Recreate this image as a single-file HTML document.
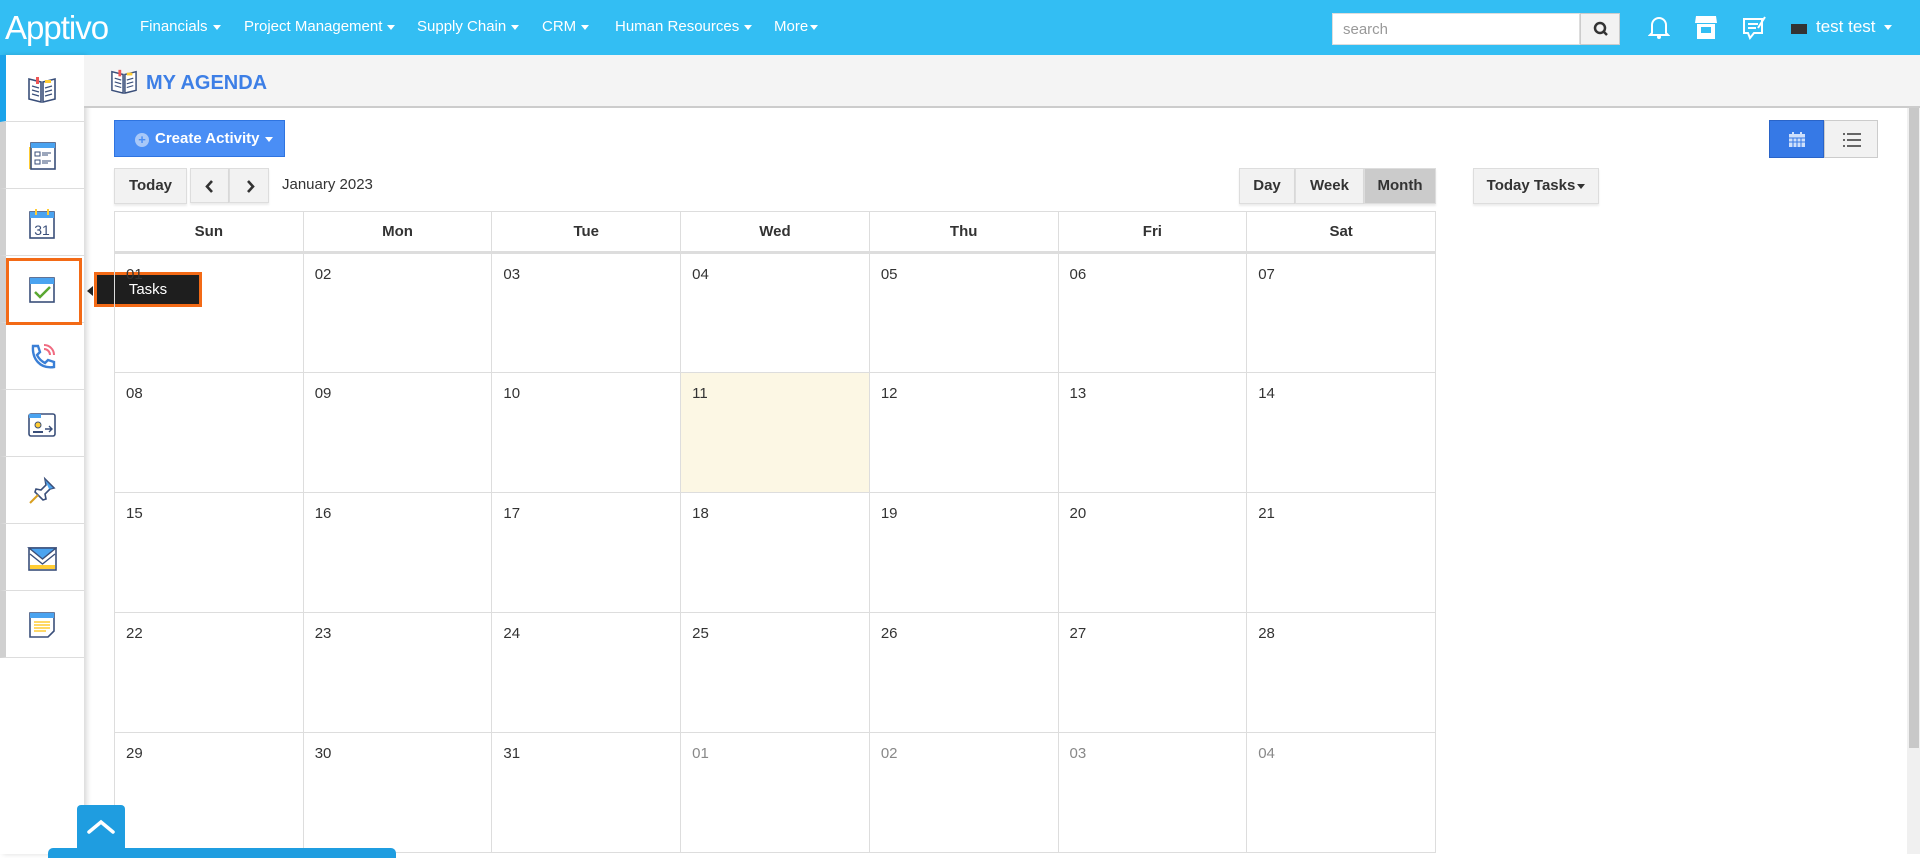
<!DOCTYPE html>
<html><head><meta charset="utf-8"><style>
*{box-sizing:border-box;margin:0;padding:0}
body{width:1920px;height:854px;overflow:hidden;font-family:"Liberation Sans",Arial,sans-serif;background:#fff;position:relative;color:#333}
.top{position:absolute;left:0;top:0;width:1920px;height:55px;background:#33bef3}
.logo{position:absolute;left:5px;top:9px;color:#fff;font-size:33px;letter-spacing:-1px}
.nav{position:absolute;top:18px;color:#fff;font-size:15px}
.car{display:inline-block;width:0;height:0;border-left:4px solid transparent;border-right:4px solid transparent;border-top:5px solid #fff;vertical-align:middle;margin-left:5px}
.search{position:absolute;left:1332px;top:13px;width:248px;height:32px;background:#fff;border:1px solid #ddd;font-size:15px;color:#999;padding:7px 10px}
.sbtn{position:absolute;left:1580px;top:13px;width:40px;height:32px;background:#f2f2f2;border:1px solid #ccc}
.side{position:absolute;left:0;top:55px;width:84px;height:799px;background:#fff;box-shadow:3px 0 5px rgba(0,0,0,.15)}
.si{position:absolute;left:0;width:84px;height:67px;border-left:6px solid #d0d0d0;border-bottom:1px solid #ddd;background:#fff}
.si svg{position:absolute;left:21px;top:19px}
.hdr{position:absolute;left:84px;top:55px;width:1836px;height:53px;background:#f4f4f4;border-bottom:2px solid #ccc}
.title{position:absolute;left:146px;top:72px;font-size:20px;font-weight:bold;color:#3d7fe6}
.btn{position:absolute;background:#f2f2f2;border:1px solid #ddd;font-size:15px;font-weight:bold;color:#333;text-align:center;box-shadow:0 2px 2px rgba(0,0,0,.08)}
.cal{position:absolute;left:114px;top:211px;width:1322px;border-collapse:collapse;table-layout:fixed}
.cal th{height:41px;border:1px solid #ddd;border-bottom:3px solid #ddd;font-size:15px;font-weight:bold;color:#333}
.cal td{height:120px;border:1px solid #ddd;vertical-align:top;padding:12px 11px;font-size:15px;color:#333}
.cal td.o{color:#888}
</style></head><body>
<div class="top">
<div class="logo">Apptivo</div>
<div class="nav" style="left:140px">Financials<span class="car"></span></div>
<div class="nav" style="left:244px">Project Management<span class="car"></span></div>
<div class="nav" style="left:417px">Supply Chain<span class="car"></span></div>
<div class="nav" style="left:542px">CRM<span class="car"></span></div>
<div class="nav" style="left:615px">Human Resources<span class="car"></span></div>
<div class="nav" style="left:774px">More<span class="car" style="margin-left:2px"></span></div>
<div class="search">search</div>
<div class="sbtn"><svg width="40" height="30" viewBox="0 0 40 30"><circle cx="19" cy="14" r="5" fill="none" stroke="#333" stroke-width="2.5"/><line x1="22.5" y1="17.5" x2="26" y2="21" stroke="#333" stroke-width="2.5"/></svg></div>
<svg style="position:absolute;left:1648px;top:14px" width="22" height="26" viewBox="0 0 22 26"><path d="M4 19V11a7 7 0 0114 0v8l2 2H2z" fill="none" stroke="#fff" stroke-width="2"/><circle cx="11" cy="23" r="2" fill="#fff"/></svg>
<svg style="position:absolute;left:1695px;top:14px" width="22" height="28" viewBox="0 0 22 28"><path d="M1 2h20l1 7H0z" fill="#fff"/><rect x="2" y="10" width="18" height="15" fill="#fff"/><rect x="6" y="13" width="10" height="6" fill="#33bef3"/></svg>
<svg style="position:absolute;left:1742px;top:14px" width="26" height="28" viewBox="0 0 26 28"><path d="M2 5h18v14H12l-4 5-2-5H2z" fill="none" stroke="#fff" stroke-width="2"/><path d="M6 10h10M6 14h8" stroke="#fff" stroke-width="2"/><path d="M16 14l7-11" stroke="#fff" stroke-width="2"/></svg>
<div style="position:absolute;left:1791px;top:24px;width:16px;height:10px;background:#333"></div>
<div style="position:absolute;left:1816px;top:17px;color:#fff;font-size:17px">test test<span class="car" style="margin-left:8px"></span></div>
</div>

<div class="side">
<div class="si" style="top:0;border-left-color:#1aa3ea"><svg width="30" height="30" viewBox="0 0 30 30"><path d="M2 5l12 3v20L2 25zM28 5L16 8v20l12-3z" fill="#fff" stroke="#3a4f7a" stroke-width="1.6"/><path d="M5 12l7 2M5 16l7 2M5 20l7 2M18 14l7-2M18 18l7-2M18 22l7-2" stroke="#3a4f7a" stroke-width="1.2"/><rect x="9" y="3" width="3" height="7" fill="#e55"/><rect x="18" y="6" width="6" height="3" fill="#fc3"/></svg></div>
<div class="si" style="top:67px"><svg width="30" height="30" viewBox="0 0 30 30"><rect x="2" y="6" width="3" height="22" fill="#fc3"/><rect x="4" y="2" width="24" height="26" fill="#fff" stroke="#3a4f7a" stroke-width="1.6"/><rect x="4" y="2" width="24" height="5" fill="#4aa3f0"/><rect x="8" y="11" width="5" height="4" fill="none" stroke="#3a4f7a"/><rect x="8" y="19" width="5" height="4" fill="none" stroke="#3a4f7a"/><path d="M15 12h9M15 14h6M15 20h9M15 22h6" stroke="#3a4f7a"/></svg></div>
<div class="si" style="top:134px"><svg width="30" height="32" viewBox="0 0 30 32"><rect x="3" y="4" width="24" height="26" fill="#fff" stroke="#3a4f7a" stroke-width="1.6"/><rect x="3" y="4" width="24" height="6" fill="#4aa3f0"/><rect x="8" y="1" width="2" height="6" fill="#fc3"/><rect x="20" y="1" width="2" height="6" fill="#fc3"/><text x="15" y="27" font-size="14" text-anchor="middle" fill="#3a4f7a" font-family="Liberation Sans">31</text></svg></div>
<div class="si" style="top:201px"><svg width="30" height="30" viewBox="0 0 30 30"><rect x="3" y="3" width="24" height="24" fill="#fff" stroke="#3a4f7a" stroke-width="1.6"/><rect x="3" y="3" width="24" height="6" fill="#4aa3f0"/><path d="M8 17l5 5 10-10" fill="none" stroke="#5aa832" stroke-width="2.5"/></svg></div>
<div class="si" style="top:268px"><svg width="30" height="30" viewBox="0 0 30 30"><path d="M6 4l5 0 2 6-3 3c2 4 4 6 8 8l3-3 6 2v5c-14 2-22-8-21-21z" fill="#fff" stroke="#3a7fd6" stroke-width="2.4"/><path d="M17 3a10 10 0 0110 10M17 7a6 6 0 016 6" fill="none" stroke="#f06a80" stroke-width="2"/></svg></div>
<div class="si" style="top:335px"><svg width="30" height="30" viewBox="0 0 30 30"><rect x="2" y="5" width="26" height="22" rx="2" fill="#fff" stroke="#3a4f7a" stroke-width="1.6"/><rect x="2" y="5" width="12" height="4" fill="#4aa3f0"/><circle cx="11" cy="16" r="3" fill="#fc3" stroke="#3a4f7a"/><path d="M6 23h10" stroke="#3a4f7a" stroke-width="2"/><path d="M18 20h7M22 17l3 3-3 3" fill="none" stroke="#3a4f7a" stroke-width="1.4"/></svg></div>
<div class="si" style="top:402px"><svg width="30" height="30" viewBox="0 0 30 30"><path d="M18 3l9 9-4 1-5 5 1 5-3 1-8-8 1-3 5 1 5-5z" fill="#fff" stroke="#3a4f7a" stroke-width="1.6"/><path d="M18 4l8 8-4 1z" fill="#4aa3f0"/><path d="M11 19l-8 8" stroke="#d9a020" stroke-width="2"/></svg></div>
<div class="si" style="top:469px"><svg width="30" height="30" viewBox="0 0 30 30"><rect x="2" y="5" width="27" height="22" fill="#fff" stroke="#3a4f7a" stroke-width="1.6"/><path d="M2 5l13.5 11L29 5z" fill="#4aa3f0" stroke="#3a4f7a" stroke-width="1.4"/><path d="M3 11l12.5 10L28 11" fill="none" stroke="#3a4f7a" stroke-width="1.4"/><rect x="3" y="22" width="25" height="4" fill="#fc3"/></svg></div>
<div class="si" style="top:536px"><svg width="30" height="30" viewBox="0 0 30 30"><path d="M3 3h24v18l-6 6H3z" fill="#fff" stroke="#3a4f7a" stroke-width="1.6"/><rect x="3" y="3" width="24" height="5" fill="#4aa3f0"/><path d="M7 12h16M7 15h16M7 18h16M7 21h12" stroke="#fc3" stroke-width="1.6"/></svg></div>
</div>
<div style="position:absolute;left:6px;top:258px;width:76px;height:67px;border:3px solid #f36a16"></div>
<div style="position:absolute;left:87px;top:286px;width:0;height:0;border-top:5px solid transparent;border-bottom:5px solid transparent;border-right:6px solid #222"></div>
<div style="position:absolute;left:94px;top:272px;width:108px;height:35px;background:#1e1e1e;border:3px solid #f36a16;color:#fff;font-size:15px;text-align:center;line-height:29px">Tasks</div>

<div class="hdr"></div>
<svg style="position:absolute;left:110px;top:68px" width="28" height="26" viewBox="0 0 30 28"><path d="M2 4l12 3v20L2 24zM28 4L16 7v20l12-3z" fill="#fff" stroke="#3a4f7a" stroke-width="1.6"/><path d="M5 11l7 2M5 15l7 2M5 19l7 2M18 13l7-2M18 17l7-2M18 21l7-2" stroke="#3a4f7a" stroke-width="1.2"/><rect x="9" y="2" width="3" height="7" fill="#e55"/><rect x="18" y="5" width="6" height="3" fill="#fc3"/></svg>
<div class="title">MY AGENDA</div>

<div style="position:absolute;left:114px;top:120px;width:171px;height:37px;background:#4a8ef5;border:1px solid #2f74e0;color:#fff;font-size:15px;font-weight:bold;line-height:35px;padding-left:20px"><span style="display:inline-block;width:14px;height:14px;border-radius:50%;background:#a8c8f8;vertical-align:-1px;margin-right:6px;color:#4a8ef5;font-size:13px;line-height:14px;text-align:center">+</span>Create Activity<span class="car"></span></div>

<div class="btn" style="left:114px;top:168px;width:73px;height:36px;line-height:34px">Today</div>
<div class="btn" style="left:190px;top:168px;width:39px;height:35px"><svg style="position:absolute;left:14px;top:11px" width="10" height="13" viewBox="0 0 10 13"><path d="M7 1L2 6.5 7 12" fill="none" stroke="#333" stroke-width="2.6"/></svg></div>
<div class="btn" style="left:229px;top:168px;width:40px;height:35px"><svg style="position:absolute;left:15px;top:11px" width="10" height="13" viewBox="0 0 10 13"><path d="M3 1l5 5.5L3 12" fill="none" stroke="#333" stroke-width="2.6"/></svg></div>
<div style="position:absolute;left:282px;top:176px;font-size:15px;color:#333">January 2023</div>

<div class="btn" style="left:1239px;top:168px;width:56px;height:36px;line-height:34px">Day</div>
<div class="btn" style="left:1295px;top:168px;width:69px;height:36px;line-height:34px">Week</div>
<div class="btn" style="left:1364px;top:168px;width:72px;height:36px;line-height:34px;background:#cbcbcb">Month</div>
<div class="btn" style="left:1473px;top:168px;width:126px;height:36px;line-height:34px">Today Tasks<span class="car" style="border-top-color:#333;margin-left:2px"></span></div>

<div style="position:absolute;left:1769px;top:120px;width:55px;height:38px;background:#3679e6;border:1px solid #2a64c8"><svg style="position:absolute;left:19px;top:11px" width="16" height="15" viewBox="0 0 16 15"><rect x="0" y="2" width="16" height="13" fill="#cfe0fb"/><rect x="3" y="0" width="2" height="4" fill="#cfe0fb"/><rect x="11" y="0" width="2" height="4" fill="#cfe0fb"/><path d="M0 6h16M4 6v9M8 6v9M12 6v9M0 10h16" stroke="#3679e6"/></svg></div>
<div style="position:absolute;left:1824px;top:120px;width:54px;height:38px;background:#f2f2f2;border:1px solid #ccc"><svg style="position:absolute;left:18px;top:12px" width="18" height="14" viewBox="0 0 18 14"><path d="M0 1h2M4 1h14M0 7h2M4 7h14M0 13h2M4 13h14" stroke="#666" stroke-width="2"/></svg></div>

<table class="cal">
<tr><th>Sun</th><th>Mon</th><th>Tue</th><th>Wed</th><th>Thu</th><th>Fri</th><th>Sat</th></tr>
<tr><td>01</td><td>02</td><td>03</td><td>04</td><td>05</td><td>06</td><td>07</td></tr>
<tr><td>08</td><td>09</td><td>10</td><td style="background:#fcf7e4">11</td><td>12</td><td>13</td><td>14</td></tr>
<tr><td>15</td><td>16</td><td>17</td><td>18</td><td>19</td><td>20</td><td>21</td></tr>
<tr><td>22</td><td>23</td><td>24</td><td>25</td><td>26</td><td>27</td><td>28</td></tr>
<tr><td>29</td><td>30</td><td>31</td><td class="o">01</td><td class="o">02</td><td class="o">03</td><td class="o">04</td></tr>
</table>

<div style="position:absolute;left:1907px;top:108px;width:13px;height:746px;background:#f0f0f0"><div style="margin-left:2px;width:10px;height:640px;background:#c8c8c8"></div></div>

<div style="position:absolute;left:48px;top:848px;width:348px;height:10px;background:#1f9de0;border-radius:5px 5px 0 0"></div>
<div style="position:absolute;left:77px;top:805px;width:48px;height:49px;background:#1f9de0;border-radius:4px 4px 0 0"><svg style="position:absolute;left:10px;top:14px" width="28" height="16" viewBox="0 0 28 16"><path d="M2 13L14 3l12 10" fill="none" stroke="#fff" stroke-width="3.5" stroke-linecap="round"/></svg></div>
</body></html>
